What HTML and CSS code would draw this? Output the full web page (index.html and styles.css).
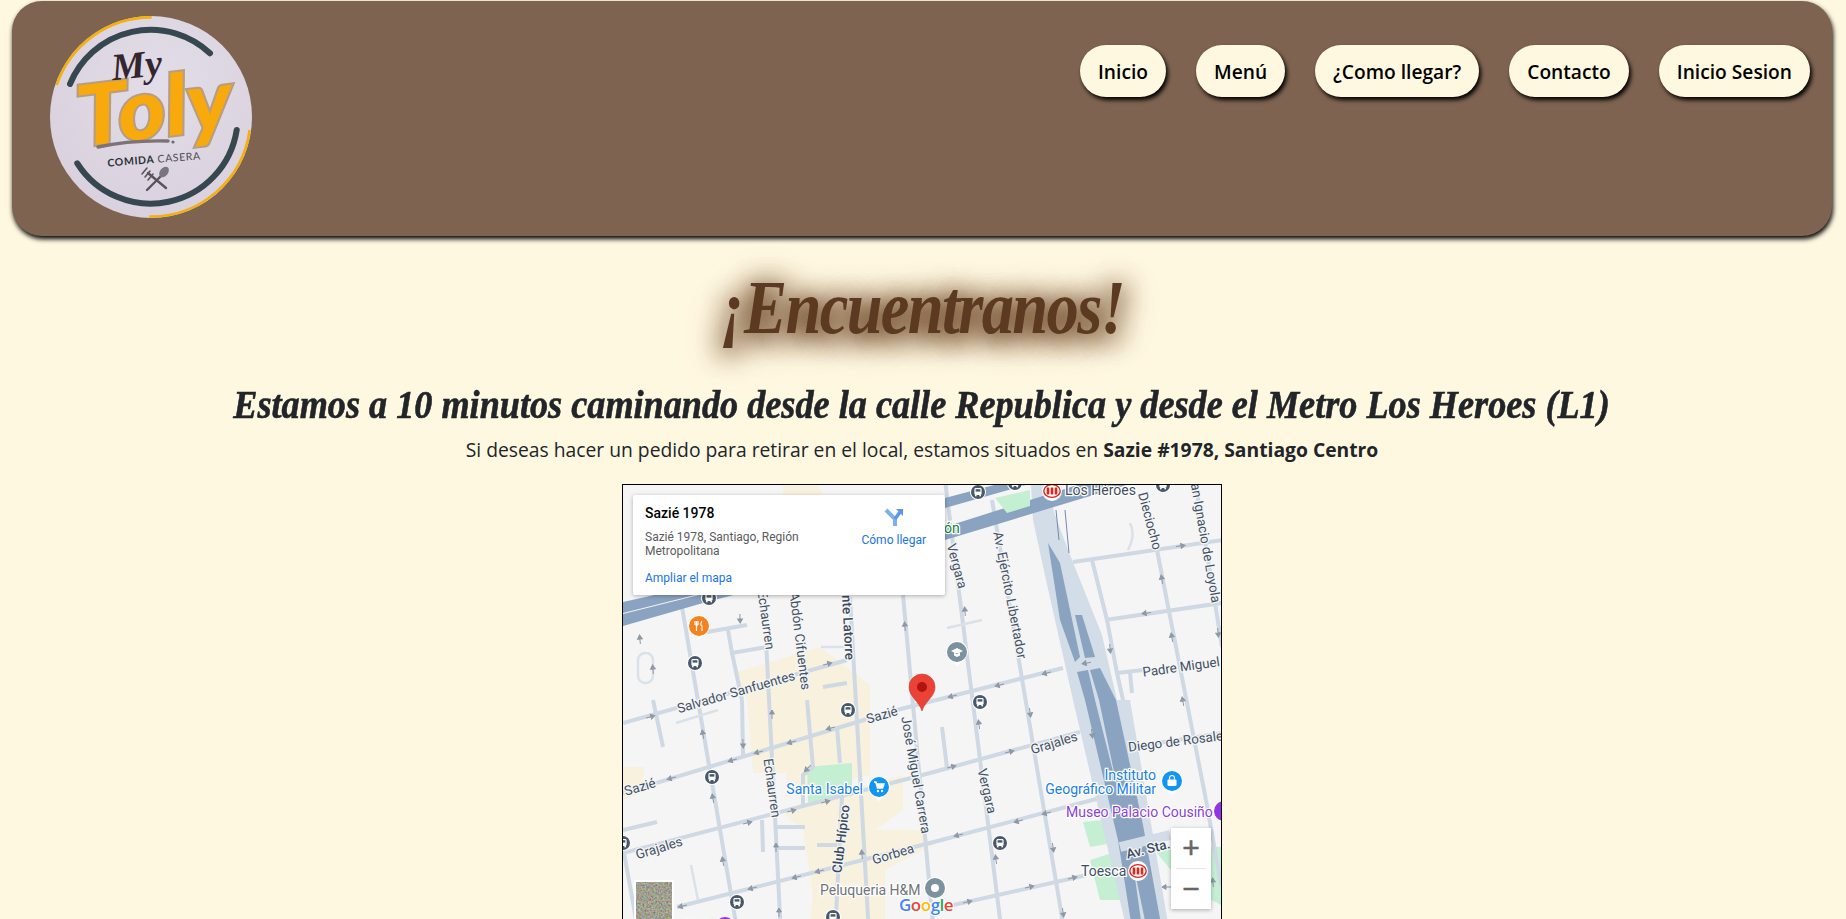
FILE: index.html
```html
<!DOCTYPE html>
<html lang="es">

<head>
    <meta charset="UTF-8">
    <meta name="viewport" content="width=device-width, initial-scale=1.0">
    <title>My Toly - Encuentranos</title>
    <link rel="stylesheet" href="styles.css">
</head>

<body>
    <header class="topbar">
        <svg class="logo" viewBox="0 0 202 202" aria-label="My Toly">
            <defs>
                <radialGradient id="logoBg" cx="55%" cy="35%" r="75%">
                    <stop offset="0" stop-color="#e2dde8" />
                    <stop offset="1" stop-color="#d8d0dc" />
                </radialGradient>
            </defs>
            <circle cx="101" cy="101" r="101" fill="url(#logoBg)" />
            <path class="logo-ring-y" d="M6.7 69A99.5 99.5 0 0 1 101.7 1.4" />
            <path class="logo-ring-y" d="M199.6 114A99.5 99.5 0 0 1 99.3 200.5" />
            <path class="logo-ring-d" d="M20 68A87 87 0 0 1 160 37.3" />
            <path class="logo-ring-d" d="M186.7 114A87 87 0 0 1 27.3 147.3" />
            <text class="logo-toly" x="27" y="122" textLength="156" lengthAdjust="spacingAndGlyphs" transform="rotate(-7 100 100)">Toly</text>
            <text class="logo-my" x="62" y="62" transform="rotate(-6 85 55)">My</text>
            <path class="logo-swoosh" d="M48 131Q80 124 118 125" />
            <circle cx="123" cy="126" r="1.6" fill="#6d6a70" />
            <text class="logo-sub" x="104" y="147" transform="rotate(-4.5 104 143)"><tspan class="logo-sub-b">COMIDA</tspan> CASERA</text>
            <g class="logo-cutlery">
                <path d="M98 157L116 172M112 159L97 174" />
                <path d="M92 158L97 152M95 161L100 155M98 164L103 158" stroke-width="1.6" />
                <ellipse cx="114" cy="156" rx="4" ry="6" transform="rotate(38 114 156)" fill="#7b7480" stroke="none" />
            </g>
        </svg>
        <nav class="menu">
            <a class="menu-btn" href="#">Inicio</a>
            <a class="menu-btn" href="#">Menú</a>
            <a class="menu-btn" href="#">¿Como llegar?</a>
            <a class="menu-btn" href="#">Contacto</a>
            <a class="menu-btn" href="#">Inicio Sesion</a>
        </nav>
    </header>

    <main class="content">
        <h1 class="title">¡Encuentranos!</h1>
        <h2 class="subtitle">Estamos a 10 minutos caminando desde la calle Republica y desde el Metro Los Heroes (L1)</h2>
        <p class="info">Si deseas hacer un pedido para retirar en el local, estamos situados en <strong>Sazie #1978, Santiago Centro</strong></p>

        <div class="map">
            <svg class="map-canvas" viewBox="0 0 598 450">
                <defs>
                    <path id="ar" d="M-4 0H1M1-2.4L5 0L1 2.4Z" />
                    <g id="bus">
                        <circle r="8" fill="#fff" />
                        <circle r="7" fill="#48596b" />
                        <rect x="-3.6" y="-4" width="7.2" height="7" rx="1.4" fill="#fff" />
                        <rect x="-2.4" y="-2.8" width="4.8" height="2.4" fill="#48596b" />
                        <rect x="-3" y="3" width="1.6" height="1.3" fill="#fff" />
                        <rect x="1.4" y="3" width="1.6" height="1.3" fill="#fff" />
                    </g>
                    <g id="metro">
                        <circle r="10" fill="#fff" />
                        <ellipse rx="8.2" ry="6.4" fill="#fff" stroke="#e0241a" stroke-width="1.4" />
                        <path d="M-4 -3.4V3.4M0 -3.4V3.4M4 -3.4V3.4" stroke="#e0241a" stroke-width="2.6" />
                    </g>
                    <path id="pinback" d="M-11 0A11 11 0 0 1 11 0C11 6 5 9 0 14C-5 9 -11 6 -11 0Z" fill="#fff" />
                    <filter id="satNoise" x="0" y="0" width="100%" height="100%">
                        <feTurbulence type="fractalNoise" baseFrequency="0.55" numOctaves="2" seed="4" />
                        <feColorMatrix values="0.7 0 0 0 0  0 0.7 0 0 0  0 0 0.55 0 0  0 0 0 0 1" />
                    </filter>
                </defs>

                <rect width="598" height="450" fill="#f5f5f5" />

                <!-- zonas -->
                <path class="beige" d="M114 187L197 162L247 200V290L163 312V288H130L124 215Z" />
                <path class="beige" d="M157 325L280 290V325L252 345L296 345L310 360L262 385V450H185L190 410L180 345Z" />
                <path class="beige" d="M0 282H22L18 308L0 315Z" />
                <path class="beige" d="M160 0H195L200 10H160Z" />
                <path class="green" d="M184 282L229 278V310L185 318Z" />
                <path class="green" d="M460 337L480 335L490 358L467 362Z" />
                <path class="green" d="M467 375L489 368L500 415L477 415Z" />
                <path class="green" d="M534 368L565 360L598 362V420L560 400Z" />

                <!-- calles -->
                <path class="street" d="M322-5L379 450M369 15L442 450M534 65L583 315M572-5L592 118L599 162M143 155L158 450M59 122L115 450M0 362L14 440M30 215L40 262M119 215L120 270M109 168L119 215M227 112L246 450M219 312L212 450M184 215L190 282L180 290V322M214 242L217 278M280 110L311 450M319 242L324 283M469 75L484 135L494 188L510 260M507 188L509 208M583 315L598 400" />
                <path class="street" d="M0 308L274 225L440 183M0 238L224 175M0 368L307 288L457 247M509 262L599 248M54 422L307 358L477 313M317 423L464 390M450 77L599 55M482 135L599 118M494 188L520 185M84 147L124 140M105 145L109 168L144 162M154 342H182M154 363H182M194 360H214M139 335L140 367M0 345L34 337M200 202L224 198" />
                <path class="street-thin" d="M507 38Q513 50 505 65M324 143L359 135M53 238L95 225M198 162H222M68 380L75 415" />
                <rect class="street-thin" x="15" y="168" width="15" height="30" rx="7" />

                <!-- autopistas -->
                <path class="road-light" d="M408 0H424L432 30L447 70L465 115L479 150L494 215H507L547 450H505L450 215L423 95L410 35Z" />
                <path class="road-thin" d="M442 25L446 68M433 25L436 55" />
                <path class="road-dark" d="M0 117L90 97L322 13L390-5H420L322 23L80 108L0 128Z" />
                <path class="road-dark" d="M0 129L80 109L322 42L470-5H520L322 55L80 118L0 141Z" />
                <path class="green" d="M372 13L407 5V21L384 28Z" />
                <path class="road-dark" d="M425 58L437 78L457 172L452 177L437 135Z" />
                <path class="road-dark" d="M452 130H459L472 172L462 173Z" />
                <path class="road-dark" d="M454 187L465 185L472 215L462 215Z" />
                <path class="road-dark" d="M467 185L477 183L493 215H476Z" />
                <path class="road-dark" d="M462 215H472L506 350L520 450H510L495 355Z" />
                <path class="road-dark" d="M476 215H493L520 340L540 450H525Z" />
                <path class="road-cross" d="M497 362L547 350" />
                <path class="road-cross-b" d="M452 183L478 178" />

                <!-- flechas -->
                <g class="arrows">
                    <use href="#ar" transform="translate(17 155) rotate(-95)" />
                    <use href="#ar" transform="translate(30 185) rotate(-95)" />
                    <use href="#ar" transform="translate(117 133) rotate(88)" />
                    <use href="#ar" transform="translate(204 179) rotate(-15)" />
                    <use href="#ar" transform="translate(282 142) rotate(-95)" />
                    <use href="#ar" transform="translate(557 61) rotate(-8)" />
                    <use href="#ar" transform="translate(539 95) rotate(-100)" />
                    <use href="#ar" transform="translate(524 128) rotate(172)" />
                    <use href="#ar" transform="translate(549 153) rotate(-100)" />
                    <use href="#ar" transform="translate(487 163) rotate(85)" />
                    <use href="#ar" transform="translate(595 147) rotate(85)" />
                    <use href="#ar" transform="translate(464 178) rotate(170)" />
                    <use href="#ar" transform="translate(424 188) rotate(165)" />
                    <use href="#ar" transform="translate(377 200) rotate(165)" />
                    <use href="#ar" transform="translate(330 211) rotate(165)" />
                    <use href="#ar" transform="translate(342 127) rotate(-95)" />
                    <use href="#ar" transform="translate(27 232) rotate(-16)" />
                    <use href="#ar" transform="translate(80 250) rotate(-100)" />
                    <use href="#ar" transform="translate(120 258) rotate(88)" />
                    <use href="#ar" transform="translate(110 275) rotate(164)" />
                    <use href="#ar" transform="translate(136 267) rotate(164)" />
                    <use href="#ar" transform="translate(169 257) rotate(164)" />
                    <use href="#ar" transform="translate(208 243) rotate(164)" />
                    <use href="#ar" transform="translate(49 293) rotate(164)" />
                    <use href="#ar" transform="translate(185 283) rotate(135)" />
                    <use href="#ar" transform="translate(149 230) rotate(-90)" />
                    <use href="#ar" transform="translate(90 314) rotate(-100)" />
                    <use href="#ar" transform="translate(124 338) rotate(-15)" />
                    <use href="#ar" transform="translate(168 326) rotate(-15)" />
                    <use href="#ar" transform="translate(202 317) rotate(-15)" />
                    <use href="#ar" transform="translate(153 363) rotate(-90)" />
                    <use href="#ar" transform="translate(100 377) rotate(-100)" />
                    <use href="#ar" transform="translate(239 370) rotate(-95)" />
                    <use href="#ar" transform="translate(197 386) rotate(166)" />
                    <use href="#ar" transform="translate(174 392) rotate(166)" />
                    <use href="#ar" transform="translate(130 403) rotate(166)" />
                    <use href="#ar" transform="translate(60 421) rotate(166)" />
                    <use href="#ar" transform="translate(156 428) rotate(-90)" />
                    <use href="#ar" transform="translate(407 227) rotate(82)" />
                    <use href="#ar" transform="translate(356 240) rotate(-98)" />
                    <use href="#ar" transform="translate(386 267) rotate(-15)" />
                    <use href="#ar" transform="translate(328 282) rotate(-15)" />
                    <use href="#ar" transform="translate(469 248) rotate(82)" />
                    <use href="#ar" transform="translate(424 328) rotate(165)" />
                    <use href="#ar" transform="translate(396 336) rotate(165)" />
                    <use href="#ar" transform="translate(336 350) rotate(165)" />
                    <use href="#ar" transform="translate(430 362) rotate(82)" />
                    <use href="#ar" transform="translate(373 375) rotate(-98)" />
                    <use href="#ar" transform="translate(449 393) rotate(-13)" />
                    <use href="#ar" transform="translate(406 402) rotate(-13)" />
                    <use href="#ar" transform="translate(344 417) rotate(-13)" />
                    <use href="#ar" transform="translate(440 427) rotate(82)" />
                    <use href="#ar" transform="translate(560 217) rotate(-100)" />
                    <use href="#ar" transform="translate(544 402) rotate(180)" />
                    <use href="#ar" transform="translate(590 398) rotate(-95)" />
                </g>

                <!-- nombres de calles -->
                <g class="lbl">
                    <text transform="translate(334 81) rotate(75)">Vergara</text>
                    <text transform="translate(387 110) rotate(79)">Av. Ejército Libertador</text>
                    <text transform="translate(527 36) rotate(75)">Dieciocho</text>
                    <text transform="translate(582 54) rotate(80)">San Ignacio de Loyola</text>
                    <text transform="translate(558 182) rotate(-8)">Padre Miguel</text>
                    <text transform="translate(143 135) rotate(82)">Echaurren</text>
                    <text transform="translate(177 156) rotate(83)">Abdón Cifuentes</text>
                    <text transform="translate(224 120) rotate(87)" class="lbl-b">Presidente Latorre</text>
                    <text transform="translate(113 207) rotate(-16)">Salvador Sanfuentes</text>
                    <text transform="translate(259 230) rotate(-16)">Sazié</text>
                    <text transform="translate(17 302) rotate(-16)">Sazié</text>
                    <text transform="translate(149 303) rotate(82)">Echaurren</text>
                    <text transform="translate(293 290) rotate(80)">José Miguel Carrera</text>
                    <text transform="translate(218 354) rotate(-83)" class="lbl-b">Club Hípico</text>
                    <text transform="translate(36 363) rotate(-17)">Grajales</text>
                    <text transform="translate(270 369) rotate(-17)">Gorbea</text>
                    <text transform="translate(364 306) rotate(77)">Vergara</text>
                    <text transform="translate(431 258) rotate(-17)">Grajales</text>
                    <text transform="translate(556 256) rotate(-7)">Diego de Rosales</text>
                    <text transform="translate(525 364) rotate(-14)" class="lbl-b">Av. Sta.</text>
                </g>

                <!-- puntos -->
                <use href="#bus" x="72" y="178" />
                <use href="#bus" x="86" y="113" />
                <use href="#bus" x="355" y="7" />
                <use href="#bus" x="392" y="-2" />
                <use href="#bus" x="540" y="0" />
                <use href="#bus" x="225" y="225" />
                <use href="#bus" x="89" y="292" />
                <use href="#bus" x="114" y="417" />
                <use href="#bus" x="0" y="358" />
                <use href="#bus" x="210" y="432" />
                <use href="#bus" x="357" y="217" />
                <use href="#bus" x="377" y="358" />

                <use href="#metro" x="429" y="6" />
                <use href="#metro" x="515" y="386" />

                <g class="poi-text">
                    <text x="442" y="10" fill="#3f4f61">Los Héroes</text>
                    <text x="321" y="48" fill="#188038">ón</text>
                    <text x="240" y="309" text-anchor="end" fill="#1a80e6">Santa Isabel</text>
                    <text x="197" y="410" fill="#70757a">Peluqueria H&amp;M</text>
                    <text x="533" y="295" text-anchor="end" fill="#1a80e6">Instituto</text>
                    <text x="533" y="309" text-anchor="end" fill="#1a80e6">Geográfico Militar</text>
                    <text x="443" y="332" fill="#8a3fdc">Museo Palacio Cousiño</text>
                    <text x="458" y="391" fill="#3f4f61">Toesca</text>
                    <text x="62" y="446" fill="#8a3fdc">Hub</text>
                </g>

                <g transform="translate(76 141)">
                    <use href="#pinback" />
                    <circle r="10" fill="#f5811f" />
                    <path d="M-4-5V-1M-2.5-5V5M-1-5V-1M-4-1H-1M3-5C1.5-3 1.5 0 3 0V5" stroke="#fff" stroke-width="1.2" fill="none" />
                </g>
                <g transform="translate(334 167)">
                    <use href="#pinback" />
                    <circle r="10" fill="#7c939f" />
                    <path d="M-6-1L0-4L6-1L0 2ZM-3 1V3.5L0 5L3 3.5V1" fill="#fff" />
                </g>
                <g transform="translate(256 302)">
                    <use href="#pinback" />
                    <circle r="10" fill="#1296f2" />
                    <path d="M-5-5H-3L-1.5 1H3.5L5-3H-2.5" stroke="#fff" stroke-width="1.5" fill="#fff" />
                    <circle cx="-1" cy="4" r="1.2" fill="#fff" />
                    <circle cx="3" cy="4" r="1.2" fill="#fff" />
                </g>
                <g transform="translate(549 296)">
                    <use href="#pinback" />
                    <circle r="10" fill="#1296f2" />
                    <rect x="-4.5" y="-1.5" width="9" height="6.5" rx="1" fill="#fff" />
                    <path d="M-2.5-1.5V-3A2.5 2.5 0 0 1 2.5-3V-1.5" stroke="#fff" stroke-width="1.2" fill="none" />
                </g>
                <g transform="translate(312 403)">
                    <use href="#pinback" />
                    <circle r="10" fill="#7c939f" />
                    <circle r="4" fill="#fff" />
                </g>
                <g transform="translate(601 326)">
                    <use href="#pinback" />
                    <circle r="10" fill="#9334e6" />
                </g>
                <circle cx="102" cy="442" r="10" fill="#9334e6" />

                <!-- marcador -->
                <path d="M299 226C296 216 286 212 286 202A13 13 0 0 1 312 202C312 212 302 216 299 226Z" fill="#ea4335" stroke="#d33a2c" stroke-width="0.6" />
                <circle cx="299" cy="202" r="5" fill="#b3130f" />

                <!-- miniatura satelite -->
                <rect x="11" y="395" width="40" height="60" fill="#fff" />
                <rect x="13" y="397" width="36" height="56" filter="url(#satNoise)" />

                <!-- google -->
                <text class="glogo" x="276" y="426"><tspan fill="#4285f4">G</tspan><tspan fill="#ea4335">o</tspan><tspan fill="#fbbc05">o</tspan><tspan fill="#4285f4">g</tspan><tspan fill="#34a853">l</tspan><tspan fill="#ea4335">e</tspan></text>
            </svg>

            <div class="place-card">
                <div class="place-info">
                    <div class="place-name">Sazié 1978</div>
                    <div class="place-address">Sazié 1978, Santiago, Región Metropolitana</div>
                    <a class="place-link" href="#">Ampliar el mapa</a>
                </div>
                <a class="place-dir" href="#">
                    <svg class="dir-icon" viewBox="0 0 20 20">
                        <path d="M2 3L11 12V19" fill="none" stroke="#7fb0ee" stroke-width="4" />
                        <path d="M11 12L16 5" fill="none" stroke="#5b97e8" stroke-width="3.5" />
                        <path d="M12 2H19V9Z" fill="#5b97e8" />
                    </svg>
                    <span>Cómo llegar</span>
                </a>
            </div>

            <div class="zoom-ctrl">
                <span class="zoom-btn">+</span>
                <span class="zoom-sep"></span>
                <span class="zoom-btn">−</span>
            </div>
        </div>
    </main>
</body>

</html>
```

FILE: styles.css
```css
/* styles.css */

body {
    margin: 0;
    background-color: #fff8e1;
    color: #212529;
    font-family: "Open Sans", Arial, sans-serif;
    overflow-x: hidden;
}

.topbar {
    display: flex;
    justify-content: space-between;
    align-items: flex-start;
    height: 235px;
    margin: 1px 14px 0 12px;
    padding: 15px 22px 0 38px;
    box-sizing: border-box;
    background-color: #7e6350;
    border-radius: 30px;
    box-shadow: 1px 3px 5px #000;
}

.logo {
    width: 202px;
    height: 202px;
    flex: none;
}

.logo-ring-y {
    fill: none;
    stroke: #f4b00f;
    stroke-width: 2.6;
}

.logo-ring-d {
    fill: none;
    stroke: #37474f;
    stroke-width: 6;
    stroke-linecap: round;
}

.logo-my {
    font-family: "Liberation Serif", serif;
    font-size: 38px;
    font-style: italic;
    font-weight: 700;
    fill: #33262e;
}

.logo-toly {
    font-family: Lato, sans-serif;
    font-size: 84px;
    font-style: italic;
    font-weight: 900;
    fill: #f8a90c;
    stroke: #b59d86;
    stroke-width: 4px;
    paint-order: stroke;
}

.logo-swoosh {
    fill: none;
    stroke: #7c7278;
    stroke-width: 3.4;
    stroke-linecap: round;
}

.logo-sub {
    font-family: Lato, sans-serif;
    font-size: 10.5px;
    letter-spacing: 0.6px;
    text-anchor: middle;
    fill: #4a4b50;
}

.logo-sub-b {
    font-weight: 700;
    fill: #2b3136;
}

.logo-cutlery {
    fill: none;
    stroke: #59545c;
    stroke-width: 2.4;
    stroke-linecap: round;
}

.menu {
    display: flex;
    gap: 30px;
    margin-top: 29px;
}

.menu-btn {
    display: flex;
    align-items: center;
    height: 52px;
    padding: 0 18px;
    background-color: #fff8e1;
    border-radius: 26px;
    color: #000;
    font-size: 19.2px;
    font-weight: 600;
    text-decoration: none;
    box-shadow: 2px 3px 4px #000;
}

.content {
    display: flex;
    flex-direction: column;
    align-items: center;
    width: 1844px;
}

.title {
    margin: 26px 0 0;
    color: #5c3a21;
    font-family: "Liberation Serif", serif;
    font-size: 76px;
    font-style: italic;
    font-weight: 700;
    line-height: 90px;
    letter-spacing: -2px;
    text-shadow: 0 4px 28px #6b4423, 0 4px 28px #6b4423, 0 4px 44px #8a6a4c;
    transform: scaleX(0.85);
}

.subtitle {
    margin: 29px 0 0;
    font-family: "Liberation Serif", serif;
    font-size: 40px;
    font-style: italic;
    font-weight: 700;
    line-height: 48px;
    -webkit-text-stroke: 0.6px #212529;
    white-space: nowrap;
    transform: scaleX(0.905);
}

.info {
    margin: 6px 0 0;
    font-size: 19.3px;
    line-height: 30px;
}

.info strong {
    font-weight: 700;
}

.map {
    position: relative;
    width: 600px;
    height: 452px;
    margin-top: 19px;
    box-sizing: border-box;
    border: 1px solid #000;
    overflow: hidden;
}

.map-canvas {
    display: block;
    width: 598px;
    height: 450px;
}

.map-canvas text,
.place-card,
.zoom-ctrl {
    font-family: Roboto, Arial, sans-serif;
}

.beige {
    fill: #f8f1de;
}

.green {
    fill: #c5efd3;
}

.street {
    fill: none;
    stroke: #ced9e3;
    stroke-width: 4;
}

.street-thin {
    fill: none;
    stroke: #d9e1e9;
    stroke-width: 2.5;
}

.road-dark {
    fill: #8aa3c0;
}

.road-light {
    fill: #d3dde7;
}

.road-thin {
    fill: none;
    stroke: #6f8cb0;
    stroke-width: 1;
}

.road-cross {
    fill: none;
    stroke: #d3dde7;
    stroke-width: 10;
}

.road-cross-b {
    fill: none;
    stroke: #d3dde7;
    stroke-width: 4;
}

.arrows use {
    fill: #8d99a6;
    stroke: #8d99a6;
    stroke-width: 1;
}

.lbl text {
    font-size: 13.3px;
    fill: #415164;
    stroke: #f5f5f5;
    stroke-width: 2.5px;
    paint-order: stroke;
    text-anchor: middle;
    dominant-baseline: central;
}

.lbl .lbl-b {
    font-weight: 500;
    fill: #3a4a5c;
}

.poi-text text {
    font-size: 14px;
    stroke: #fff;
    stroke-width: 2.5px;
    paint-order: stroke;
}

.map-canvas .glogo {
    font-family: "Open Sans", sans-serif;
    font-size: 17px;
    font-weight: 600;
    letter-spacing: -0.5px;
    stroke: #fff;
    stroke-width: 2px;
    paint-order: stroke;
}

.place-card {
    position: absolute;
    top: 10px;
    left: 10px;
    display: flex;
    justify-content: space-between;
    width: 312px;
    height: 100px;
    padding: 8px 19px 0 12px;
    box-sizing: border-box;
    background-color: #fff;
    border-radius: 2px;
    box-shadow: 0 1px 4px rgba(0, 0, 0, 0.3);
    font-size: 12px;
}

.place-info {
    width: 190px;
}

.place-name {
    color: #000;
    font-size: 14px;
    font-weight: 500;
    line-height: 20px;
}

.place-address {
    margin-top: 7px;
    color: #5b5b5b;
    line-height: 14px;
}

.place-link,
.place-dir {
    color: #1a73e8;
    text-decoration: none;
}

.place-link {
    display: block;
    margin-top: 13px;
}

.place-dir {
    display: flex;
    flex-direction: column;
    align-items: center;
    gap: 6px;
    margin-top: 4px;
}

.dir-icon {
    width: 20px;
    height: 20px;
}

.zoom-ctrl {
    position: absolute;
    top: 343px;
    left: 548px;
    display: flex;
    flex-direction: column;
    align-items: center;
    width: 40px;
    height: 81px;
    background-color: #fff;
    box-shadow: 0 1px 4px rgba(0, 0, 0, 0.3);
}

.zoom-btn {
    height: 40px;
    color: #666;
    font-family: "Liberation Sans", sans-serif;
    font-size: 30px;
    line-height: 40px;
    -webkit-text-stroke: 0.5px #666;
}

.zoom-sep {
    width: 30px;
    height: 1px;
    background-color: #e6e6e6;
}
```
